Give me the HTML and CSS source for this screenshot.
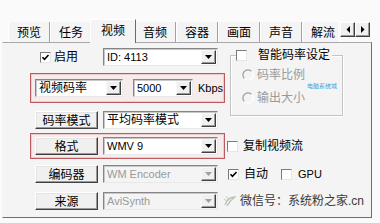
FILE: index.html
```html
<!DOCTYPE html>
<html lang="zh-CN">
<head>
<meta charset="utf-8">
<link rel="stylesheet" href="styles.css">
</head>
<body>
<div class="win">
  <div class="tabbar">
    <div class="tabs">
      <div class="tab">预览</div>
      <div class="tab">任务</div>
      <div class="tab sel">视频</div>
      <div class="tab">音频</div>
      <div class="tab">容器</div>
      <div class="tab">画面</div>
      <div class="tab">声音</div>
      <div class="tab">解流</div>
    </div>
    <div class="scroll">
      <span class="sbtn"><svg width="4" height="7" viewBox="0 0 4 7"><polygon points="4,0 4,7 0.5,3.5" fill="#000"/></svg></span>
      <span class="sbtn"><svg width="4" height="7" viewBox="0 0 4 7"><polygon points="0,0 0,7 3.5,3.5" fill="#000"/></svg></span>
    </div>
  </div>

  <div class="panel">
    <!-- row 1 -->
    <div class="r1 c1 flexrow">
      <label class="chklabel">
        <span class="chk"><svg width="9" height="9" viewBox="0 0 9 9"><path d="M1.5 4.2 L3.5 6.3 L7.5 2" fill="none" stroke="#000" stroke-width="1.6"/></svg></span>
        <span>启用</span>
      </label>
      <div class="combo w115"><span class="val">ID: 4113</span><span class="drop"><svg width="7" height="4" viewBox="0 0 7 4"><polygon points="0,0 7,0 3.5,4" fill="#000"/></svg></span></div>
    </div>

    <fieldset class="group">
      <legend class="legend"><span class="chk"></span><span class="ltxt">智能码率设定</span></legend>
      <div class="radio"><svg width="12" height="12" viewBox="0 0 12 12"><circle cx="6" cy="6" r="5" fill="#f4f4f4"/><path d="M9.6 2.4 A5 5 0 0 0 2.4 9.6" fill="none" stroke="#9a9a9a" stroke-width="1.2"/><path d="M2.4 9.6 A5 5 0 0 0 9.6 2.4" fill="none" stroke="#fff" stroke-width="1.2"/></svg><span>码率比例</span></div>
      <div class="radio"><svg width="12" height="12" viewBox="0 0 12 12"><circle cx="6" cy="6" r="5" fill="#f4f4f4"/><path d="M9.6 2.4 A5 5 0 0 0 2.4 9.6" fill="none" stroke="#9a9a9a" stroke-width="1.2"/><path d="M2.4 9.6 A5 5 0 0 0 9.6 2.4" fill="none" stroke="#fff" stroke-width="1.2"/></svg><span>输出大小</span></div>
      <span class="wm-small">电脑系统城</span>
    </fieldset>

    <!-- row 2 -->
    <div class="r2 c1 redbox">
      <div class="combo w88"><span class="val cjk">视频码率</span><span class="drop"><svg width="7" height="4" viewBox="0 0 7 4"><polygon points="0,0 7,0 3.5,4" fill="#000"/></svg></span></div>
      <div class="combo w60"><span class="val">5000</span><span class="drop"><svg width="7" height="4" viewBox="0 0 7 4"><polygon points="0,0 7,0 3.5,4" fill="#000"/></svg></span></div>
      <span class="unit">Kbps</span>
    </div>

    <!-- row 3 -->
    <div class="r3 c1 brow">
      <div class="btn">码率模式</div>
      <div class="combo w115"><span class="val cjk">平均码率模式</span><span class="drop"><svg width="7" height="4" viewBox="0 0 7 4"><polygon points="0,0 7,0 3.5,4" fill="#000"/></svg></span></div>
    </div>

    <!-- row 4 -->
    <div class="r4 c1 redbox red2">
      <div class="btn">格式</div>
      <div class="combo w115"><span class="val">WMV 9</span><span class="drop"><svg width="7" height="4" viewBox="0 0 7 4"><polygon points="0,0 7,0 3.5,4" fill="#000"/></svg></span></div>
    </div>
    <label class="r4 c2 opt copy">
      <span class="chk"></span><span>复制视频流</span>
    </label>

    <!-- row 5 -->
    <div class="r5 c1 brow">
      <div class="btn">编码器</div>
      <div class="combo w115 dis"><span class="val">WM Encoder</span><span class="drop"><svg width="7" height="4" viewBox="0 0 7 4"><polygon points="0,0 7,0 3.5,4" fill="#a0a0a0"/></svg></span></div>
    </div>
    <div class="r5 c2 opts">
      <label class="opt auto">
        <span class="chk"><svg width="9" height="9" viewBox="0 0 9 9"><path d="M1.5 4.2 L3.5 6.3 L7.5 2" fill="none" stroke="#000" stroke-width="1.6"/></svg></span><span>自动</span>
      </label>
      <label class="opt gpu">
        <span class="chk"></span><span>GPU</span>
      </label>
    </div>

    <!-- row 6 -->
    <div class="r6 c1 brow">
      <div class="btn">来源</div>
      <div class="combo w115 dis"><span class="val">AviSynth</span><span class="drop"><svg width="7" height="4" viewBox="0 0 7 4"><polygon points="0,0 7,0 3.5,4" fill="#a0a0a0"/></svg></span></div>
    </div>
    <div class="r6 c2 wm">
      <svg width="13" height="12" viewBox="0 0 13 12"><path d="M2 10 C4 4 8 2 12 2 C9 4 6 7 4 11" fill="none" stroke="#b8c4b0" stroke-width="1.3"/><path d="M1 4 L4 6 M3 1 L5 4" stroke="#c8c8c8" stroke-width="1"/></svg>
      <span>微信号：系统粉之家.cn</span>
    </div>
  </div>
</div>
</body>
</html>
```
FILE: styles.css
```css
* { box-sizing: border-box; }
html, body {
  margin: 0;
  padding: 0;
}
body {
  width: 380px;
  height: 223px;
  overflow: hidden;
  background: #fafafa;
  color: #000;
  font-family: "Liberation Sans", "Noto Sans CJK SC", sans-serif;
  font-size: 12px;
  line-height: 14px;
}
.win {
  padding-left: 2px;
}

/* ---------- tabs ---------- */
.tabbar {
  display: flex;
  height: 23px;
  margin-top: 19px;
  padding-left: 6px;
  position: relative;
  z-index: 1;
}
.tabs {
  display: flex;
  align-items: flex-start;
  width: 330px;
  height: 24px;
  overflow: hidden;
  flex: none;
}
.tab {
  flex: none;
  height: 20px;
  margin-top: 3px;
  padding: 0 8px;
  line-height: 20px;
  border-left: 1px solid #fff;
  border-right: 1px solid #a0a0a0;
  background: #f4f4f4;
  font-family: "Noto Sans CJK SC", sans-serif;
  font-size: 12px;
}
.tab.sel {
  height: 24px;
  margin: 0 -2px 0 -2px;
  padding: 0 10px;
  line-height: 19px;
  border-top: 1px solid #fff;
  border-right: 1px solid #6a6a6a;
  position: relative;
  z-index: 2;
}
.scroll {
  display: flex;
  margin-top: 3px;
  margin-left: 2px;
  align-self: flex-start;
}
.sbtn {
  width: 15px;
  height: 15px;
  display: flex;
  align-items: center;
  justify-content: center;
  background: #f0f0f0;
  border: 1px solid;
  border-color: #fff #404040 #404040 #fff;
  box-shadow: inset -1px -1px 0 #9a9a9a;
}

/* ---------- panel ---------- */
.panel {
  width: 370px;
  height: 176px;
  background: #f4f4f4;
  border: 1px solid;
  border-color: #a8a8a8 #6e6e6e #6e6e6e #f4f4f4;
  padding: 5px 0 0 27px;
  display: grid;
  grid-template-columns: 195px 1fr;
  grid-template-rows: 18px 7px 30px 8px 18px 4px 26px 6px 18px 9px 18px;
}
.c1 { grid-column: 1; }
.c2 { grid-column: 2; }
.r1 { grid-row: 1; }
.r2 { grid-row: 3; }
.r3 { grid-row: 5; }
.r4 { grid-row: 7; }
.r5 { grid-row: 9; }
.r6 { grid-row: 11; }

.flexrow {
  display: flex;
  align-items: center;
}
.chklabel {
  width: 73px;
  padding-left: 10px;
  display: flex;
  align-items: center;
  gap: 3px;
}
.chk {
  flex: none;
  width: 11px;
  height: 11px;
  background: #fff;
  border: 1px solid;
  border-color: #7a7a7a #e6e6e6 #e6e6e6 #7a7a7a;
  display: flex;
  align-items: center;
  justify-content: center;
}

/* combos */
.combo {
  flex: none;
  height: 18px;
  background: #fff;
  border: 1px solid;
  border-color: #858585 #e8e8e8 #e8e8e8 #858585;
  box-shadow: inset 1px 1px 0 #c8c8c8;
  display: flex;
  align-items: center;
  padding-left: 3px;
  font-size: 11px;
  white-space: nowrap;
}
.combo .cjk { font-size: 12px; }
.combo.dis {
  background: #f4f4f4;
  color: #9a9a9a;
}
.combo .drop {
  margin-left: auto;
  margin-right: 1px;
  width: 15px;
  height: 14px;
  background: #f0f0f0;
  border: 1px solid;
  border-color: #f8f8f8 #404040 #404040 #f8f8f8;
  box-shadow: inset -1px -1px 0 #9a9a9a;
  display: flex;
  align-items: center;
  justify-content: center;
}
.w115 { width: 115px; }
.w88 { width: 88px; }
.w60 { width: 60px; }

/* red highlight boxes */
.redbox {
  border: 1px solid #bb5a60;
  box-shadow: inset 0 0 0 1px #f0caca;
  background: #f7ecec;
  display: flex;
  align-items: center;
  padding-left: 4px;
}
.redbox .w88 { margin-right: 10px; }
.redbox .w60 { margin-right: 5px; }
.unit { font-size: 11px; }
.red2 { gap: 5px; }

/* button rows */
.brow {
  display: flex;
  align-items: center;
  gap: 5px;
  padding-left: 5px;
}
.btn {
  flex: none;
  width: 63px;
  height: 18px;
  line-height: 16px;
  text-align: center;
  background: #f0f0f0;
  border: 1px solid;
  border-color: #fff #404040 #404040 #fff;
  box-shadow: inset -1px -1px 0 #9a9a9a, inset 1px 1px 0 #e4e4e4;
  font-family: "Noto Sans CJK SC", sans-serif;
}

/* group box */
.group {
  grid-column: 2;
  grid-row: 1 / 6;
  align-self: start;
  margin: 0 0 0 5px;
  width: 113px;
  height: 68px;
  padding: 0 0 0 11px;
  border: 1px solid #c4c4c4;
  box-shadow: 1px 1px 0 #fff, inset 1px 1px 0 #fff;
  position: relative;
}
.legend {
  margin-left: -6px;
  padding: 0 2px 0 0;
  display: flex;
  align-items: center;
  gap: 11px;
  line-height: 14px;
  background: #f4f4f4;
}
.radio {
  display: flex;
  align-items: center;
  gap: 3px;
  height: 14px;
  color: #9a9a9a;
  margin-top: 6px;
}
.radio + .radio { margin-top: 9px; }
.wm-small {
  position: absolute;
  left: 76px;
  top: 21px;
  font-size: 6px;
  line-height: 6px;
  color: #4a9fd8;
  letter-spacing: 0;
}

/* right options */
.opt {
  display: flex;
  align-items: center;
}
.copy {
  align-self: center;
  margin-left: 2px;
  gap: 5px;
}
.opts {
  display: flex;
  align-items: center;
}
.auto { margin-left: 3px; gap: 5px; }
.gpu { margin-left: 13px; gap: 6px; }
.gpu span:last-child { font-size: 11px; }

.wm {
  display: flex;
  align-items: center;
  gap: 4px;
  margin-left: -2px;
  color: #3a3a3a;
  white-space: nowrap;
}
```
